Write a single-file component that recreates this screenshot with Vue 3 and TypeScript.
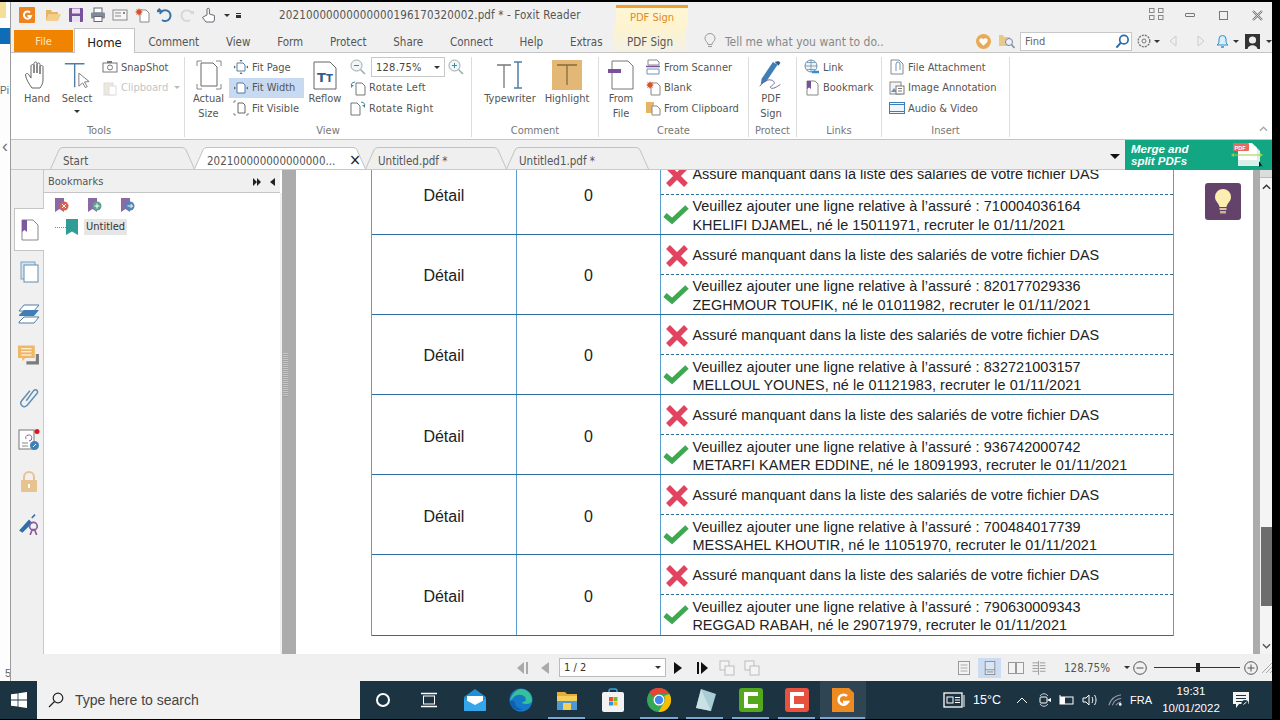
<script setup lang="ts">
// Foxit Reader window with a scrolled PDF table
interface Row {
  id: string;
  name: string;
  born: string;
}

const rows: Row[] = [
  { id: "710004036164", name: "KHELIFI DJAMEL", born: "15011971" },
  { id: "820177029336", name: "ZEGHMOUR TOUFIK", born: "01011982" },
  { id: "832721003157", name: "MELLOUL YOUNES", born: "01121983" },
  { id: "936742000742", name: "METARFI KAMER EDDINE", born: "18091993" },
  { id: "700484017739", name: "MESSAHEL KHOUTIR", born: "11051970" },
  { id: "790630009343", name: "REGGAD RABAH", born: "29071979" },
];

const ribbonTabs = ["Comment", "View", "Form", "Protect", "Share", "Connect", "Help", "Extras"];

const docTabs = [
  { label: "Start", width: 145, active: false, close: false },
  { label: "202100000000000000...", width: 172, active: true, close: true },
  { label: "Untitled.pdf *", width: 142, active: false, close: false },
  { label: "Untitled1.pdf *", width: 143, active: false, close: false },
];

const tabPath = (w: number) =>
  `M0.5 22 L9 3 Q10 0.5 13 0.5 H${w - 13} Q${w - 10} 0.5 ${w - 9} 3 L${w - 0.5} 22`;

const underlined = [
  { left: 548, width: 37 },
  { left: 640, width: 38 },
  { left: 686, width: 37 },
  { left: 732, width: 37 },
  { left: 778, width: 37 },
  { left: 820, width: 45 },
];
</script>

<template>
  <div class="screen">
    <div class="upper">
      <div class="desktop">
        <div class="d-yellow"></div>
        <div class="d-white"></div>
        <div class="d-blue"></div>
        <div class="d-text">Pi</div>
        <div class="d-arrow">‹</div>
        <div class="d-five">5</div>
      </div>

      <div class="window ui">
        <!-- title bar -->
        <div class="titlebar">
          <div class="qat">
            <svg class="q first" viewBox="0 0 16 16"><rect width="16" height="16" rx="1" fill="#ee8420"/><path d="M11 5.500A3.600 3.600 0 1 0 12 9H8.500" fill="none" stroke="#fff" stroke-width="2"/></svg>
            <svg class="q" viewBox="0 0 16 16"><path d="M1 3h5l1 2h6v2H4L1 14z" fill="#e5b565"/><path d="M4 7h12l-3 7H1z" fill="#f2cd8c"/></svg>
            <svg class="q" viewBox="0 0 16 16"><rect x="1" y="1" width="14" height="14" rx="1" fill="#7a4f9c"/><rect x="4" y="1.500" width="8" height="5" fill="#e9e2f0"/><rect x="4" y="9" width="8" height="6" fill="#e9e2f0"/></svg>
            <svg class="q" viewBox="0 0 16 16"><rect x="4" y="1" width="8" height="5" fill="#fff" stroke="#667"/><rect x="1" y="5.500" width="14" height="6" rx="1" fill="#7f8b98"/><rect x="4" y="9.500" width="8" height="5" fill="#fff" stroke="#667"/></svg>
            <svg class="q" viewBox="0 0 16 16"><rect x="1" y="3" width="14" height="10" fill="#f6f6f6" stroke="#888"/><path d="M3 6h6M3 9h6" stroke="#888"/><rect x="11" y="5" width="2" height="2" fill="#888"/></svg>
            <svg class="q" viewBox="0 0 16 16"><path d="M6 3h6l3 3v9H6z" fill="#fff" stroke="#888"/><path d="M5 1l1 2 2-1-1 2 2 1-2 1 1 2-2-1-1 2-1-2-2 1 1-2-2-1 2-1-1-2 2 1z" fill="#d9532c"/></svg>
            <svg class="q" viewBox="0 0 16 16"><path d="M3 7a5.400 5.400 0 1 1 2 6" fill="none" stroke="#3a72a8" stroke-width="2"/><path d="M0 3h6v6z" fill="#3a72a8" transform="rotate(-45 3 6) translate(0 -1)"/></svg>
            <svg class="q" viewBox="0 0 16 16"><path d="M13 7a5.400 5.400 0 1 0-2 6" fill="none" stroke="#d4d8da" stroke-width="2"/><path d="M11 4l4 0 0 4z" fill="#d4d8da"/></svg>
            <svg class="q" viewBox="0 0 16 16"><path d="M6 8V2.500a1.200 1.200 0 0 1 2.400 0V7l5 1.500V13l-1 2H5L1.500 10.500 3 9.500z" fill="#fff" stroke="#667"/></svg>
            <span class="tri small"></span>
            <span class="customize"></span>
          </div>
          <div class="doc-title">20210000000000000196170320002.pdf * - Foxit Reader</div>
          <div class="context-tab">PDF Sign</div>
          <div class="win-btns">
            <svg class="w-grid" viewBox="0 0 15 12"><g fill="none" stroke="#888"><rect x=".5" y=".5" width="4.500" height="4"/><rect x="9.500" y=".5" width="4.500" height="4"/><rect x=".5" y="7.500" width="4.500" height="4"/><rect x="9.500" y="7.500" width="4.500" height="4"/></g></svg>
            <span class="w-min"></span>
            <span class="w-max"></span>
            <svg class="w-close" viewBox="0 0 11 11"><path d="M1 1l9 9M10 1l-9 9" stroke="#777" stroke-width="2.200"/><path d="M1 1l9 9M10 1l-9 9" stroke="#f4f4f4" stroke-width=".7"/></svg>
          </div>
        </div>

        <!-- ribbon tabs -->
        <div class="tabrow">
          <div class="tab-file">File</div>
          <div class="tab-home">Home</div>
          <div v-for="t in ribbonTabs" :key="t" class="tab">{{ t }}</div>
          <div class="tab-sign">PDF Sign</div>
          <svg class="tell-bulb" viewBox="0 0 12 16"><path d="M4 11.500C4 9 1 8.500 1 5.500a5 5 0 0 1 10 0C11 8.500 8 9 8 11.500z M4 13.500h4" fill="none" stroke="#999"/></svg>
          <div class="tell">Tell me what you want to do..</div>
          <div class="tab-tools">
            <svg class="t-heart" viewBox="0 0 16 16"><circle cx="8" cy="8" r="8" fill="#e8ab55"/><path d="M8 12.500L3.800 8.200a2.400 2.400 0 0 1 4.200-2.400 2.400 2.400 0 0 1 4.200 2.400z" fill="#fff"/></svg>
            <svg class="t-folder" viewBox="0 0 16 16"><path d="M0 2h4l1 2h6v9H0z" fill="#e8c98a"/><circle cx="10" cy="9" r="3.500" fill="#eef" stroke="#789"/><path d="M12.500 11.500L15.500 15" stroke="#789" stroke-width="1.300"/></svg>
            <div class="find">
              <span>Find</span>
              <svg viewBox="0 0 16 16"><circle cx="9.500" cy="6" r="4.500" fill="none" stroke="#2a6ca8" stroke-width="1.800"/><path d="M6 9.500L1.500 14.500" stroke="#2a6ca8" stroke-width="2.200"/></svg>
            </div>
            <svg class="t-gear" viewBox="0 0 14 14"><circle cx="7" cy="7" r="2" fill="none" stroke="#777"/><circle cx="7" cy="7" r="5.800" fill="none" stroke="#777" stroke-width="1.400" stroke-dasharray="2 1.050"/></svg>
            <span class="tri small t1"></span>
            <svg class="t-prev" viewBox="0 0 8 12"><path d="M7 1L1 6l6 5z" fill="none" stroke="#ccc"/></svg>
            <svg class="t-next" viewBox="0 0 8 12"><path d="M1 1l6 5-6 5z" fill="none" stroke="#ccc"/></svg>
            <svg class="t-bell" viewBox="0 0 13 16"><path d="M1 12c2-1 2-3 2-6a3.500 3.500 0 0 1 7 0c0 3 0 5 2 6z" fill="#d8eefa" stroke="#2f8fd0"/><path d="M5 14h3" stroke="#2f8fd0" stroke-width="1.500"/></svg>
            <span class="tri small t2"></span>
            <svg class="t-user" viewBox="0 0 15 15"><rect width="15" height="15" fill="#333"/><circle cx="7.500" cy="6" r="3.600" fill="#eee"/><path d="M2.500 15c1-5 9-5 10 0z" fill="#eee"/></svg>
            <span class="tri small t3"></span>
          </div>
        </div>

        <!-- ribbon -->
        <div class="ribbon">
          <section class="group g-tools">
            <div class="group-body">
              <div class="big">
                <svg class="bi" viewBox="0 0 26 30"><path d="M8 28C5 24 2 19 1.500 15c0-2 2.500-2 3.500 0l2 3V6c0-2 3-2 3 0v7-9.500c0-2 3-2 3 0V13V4.500c0-2 3-2 3 0V14V7c0-2 3-2 3 0v13c0 4-2 6-3 8z" fill="#fff" stroke="#666"/></svg>
                <span>Hand</span>
              </div>
              <div class="big">
                <svg class="bi" viewBox="0 0 30 30"><path d="M2 3h21M12.500 3v25" stroke="#4f7da6" stroke-width="1.500"/><path d="M17 13l0 14 4-3.500 3 5 2-1-3-5 5-.5z" fill="#fff" stroke="#777"/></svg>
                <span>Select</span>
                <i class="tri small under"></i>
              </div>
              <div class="col">
                <div class="small-row"><svg viewBox="0 0 16 16"><rect x="1" y="4" width="14" height="9" fill="none" stroke="#777"/><rect x="5" y="2" width="5" height="2" fill="#777"/><circle cx="8" cy="8.500" r="2.500" fill="none" stroke="#777"/></svg><span>SnapShot</span></div>
                <div class="small-row off"><svg viewBox="0 0 16 16"><rect x="2" y="3" width="9" height="12" fill="#f0e8da" stroke="#ddd"/><rect x="7" y="6" width="7" height="9" fill="#fff" stroke="#ddd"/></svg><span>Clipboard</span><i class="tri small light"></i></div>
              </div>
            </div>
            <div class="caption">Tools</div>
          </section>

          <section class="group g-view">
            <div class="group-body">
              <div class="big two">
                <svg class="bi" viewBox="0 0 26 30"><path d="M1 6V1h5M20 1h5v5M1 24v5h5M25 24v5h-5" fill="none" stroke="#888"/><path d="M5 3h12l4 4v19H5z" fill="#fff" stroke="#666"/></svg>
                <span>Actual<br />Size</span>
              </div>
              <div class="col">
                <div class="small-row fit"><svg viewBox="0 0 16 16"><path d="M4 4h6l2 2v6H4z" fill="#fff" stroke="#4f7da6"/><path d="M8 3L6.500 1h3zM8 13l-1.500 2h3zM3 8L1 6.500v3zM13 8l2-1.500v3z" fill="#666"/></svg><span>Fit Page</span></div>
                <div class="small-row fit on"><svg viewBox="0 0 16 16"><path d="M4 3h6l2 2v8H4z" fill="#fff" stroke="#4f7da6"/><path d="M3 8L1 6.500v3zM13 8l2-1.500v3z" fill="#666"/></svg><span>Fit Width</span></div>
                <div class="small-row fit"><svg viewBox="0 0 16 16"><path d="M5 3h5l2 2v8H5z" fill="#fff" stroke="#666"/><path d="M1 3V1h2M1 13v2h2M15 13v2h-2" fill="none" stroke="#888"/></svg><span>Fit Visible</span></div>
              </div>
              <div class="big">
                <svg class="bi" viewBox="0 0 24 30"><path d="M1 2h16l6 6v21H1z" fill="#fff" stroke="#666"/><text x="4" y="22" class="reflow-t">T<tspan font-size="10">T</tspan></text></svg>
                <span>Reflow</span>
              </div>
              <div class="col zoom-col">
                <div class="small-row">
                  <svg viewBox="0 0 16 16"><circle cx="6.500" cy="6.500" r="5.500" fill="#f3f6f8" stroke="#9aa"/><path d="M10.500 10.500L15 15" stroke="#9aa" stroke-width="1.500"/><path d="M4 6.500h5" stroke="#3a8ca0"/></svg>
                  <div class="combo">128.75%<i class="tri small"></i></div>
                  <svg viewBox="0 0 16 16"><circle cx="6.500" cy="6.500" r="5.500" fill="#f3f6f8" stroke="#9aa"/><path d="M10.500 10.500L15 15" stroke="#9aa" stroke-width="1.500"/><path d="M4 6.500h5M6.500 4v5" stroke="#3a8ca0"/></svg>
                </div>
                <div class="small-row"><svg viewBox="0 0 16 16"><path d="M6 3h6l3 3v9H6z" fill="#fff" stroke="#777"/><path d="M1 5a4 4 0 0 1 4-3" fill="none" stroke="#3a8ca0"/><path d="M1 8V5h3z" fill="#3a8ca0"/></svg><span>Rotate Left</span></div>
                <div class="small-row"><svg viewBox="0 0 16 16"><path d="M1 3h6l3 3v9H1z" fill="#fff" stroke="#777"/><path d="M15 5a4 4 0 0 0-4-3" fill="none" stroke="#3a8ca0"/><path d="M15 8V5h-3z" fill="#3a8ca0"/></svg><span>Rotate Right</span></div>
              </div>
            </div>
            <div class="caption">View</div>
          </section>

          <section class="group g-comment">
            <div class="group-body">
              <div class="big">
                <svg class="bi" viewBox="0 0 28 30"><path d="M1 5h14M8 5v23" stroke="#777" stroke-width="1.300"/><path d="M18 2h8M22 2v26M18 28h8" stroke="#4f7da6" stroke-width="1.500" fill="none"/></svg>
                <span>Typewriter</span>
              </div>
              <div class="big">
                <svg class="bi hl" viewBox="0 0 30 30"><rect width="30" height="30" fill="#e3b877"/><path d="M5 5h20M15 5v20" stroke="#8a6a3a" stroke-width="1.300"/></svg>
                <span>Highlight</span>
              </div>
            </div>
            <div class="caption">Comment</div>
          </section>

          <section class="group g-create">
            <div class="group-body">
              <div class="big two">
                <svg class="bi" viewBox="0 0 26 30"><path d="M4 1h16l5 5v23H4z" fill="#fff" stroke="#777"/><rect x="0" y="9" width="13" height="4" fill="#7a4f9c"/></svg>
                <span>From<br />File</span>
              </div>
              <div class="col">
                <div class="small-row"><svg viewBox="0 0 16 16"><path d="M3 1h9l2 2v3H3z" fill="#fff" stroke="#888"/><path d="M1 7.500h14" stroke="#7a4f9c" stroke-width="1.500"/><path d="M2 10h12v5H2z" fill="#fff" stroke="#6f94b8"/></svg><span>From Scanner</span></div>
                <div class="small-row"><svg viewBox="0 0 16 16"><path d="M6 3h6l3 3v9H6z" fill="#fff" stroke="#888"/><path d="M5 1l1 2 2-1-1 2 2 1-2 1 1 2-2-1-1 2-1-2-2 1 1-2-2-1 2-1-1-2 2 1z" fill="#d9532c"/></svg><span>Blank</span></div>
                <div class="small-row"><svg viewBox="0 0 16 16"><rect x="1" y="2" width="8" height="11" fill="#e5b565"/><path d="M7 6h5l3 3v6H7z" fill="#fff" stroke="#888"/></svg><span>From Clipboard</span></div>
              </div>
            </div>
            <div class="caption">Create</div>
          </section>

          <section class="group g-protect">
            <div class="group-body">
              <div class="big two">
                <svg class="bi" viewBox="0 0 28 32"><path d="M4 20L16 2l5 3-12 18-6 3z" fill="#3f7fb5"/><path d="M18 2l4-1 2 2-2 3z" fill="#2f5f8a"/><path d="M2 28c6-8 12-8 15-5 3 3-6 5-3 7 2 1 6-1 10-4" fill="none" stroke="#6a6a88"/></svg>
                <span>PDF<br />Sign</span>
              </div>
            </div>
            <div class="caption">Protect</div>
          </section>

          <section class="group g-links">
            <div class="group-body">
              <div class="col">
                <div class="small-row"><svg viewBox="0 0 16 16"><circle cx="7" cy="7" r="6" fill="#eef3f7" stroke="#6f8ea8"/><path d="M1 7h12M7 1v12M3 3.500h8M3 10.500h8" stroke="#6f8ea8" stroke-width=".8"/><path d="M8 13h7" stroke="#2f8fd0" stroke-width="2.500"/></svg><span>Link</span></div>
                <div class="small-row"><svg viewBox="0 0 16 16"><path d="M3 1h8l3 3v11H3z" fill="#fff" stroke="#888"/><path d="M3 1h4v8L5 7.500 3 9z" fill="#7a4f9c"/></svg><span>Bookmark</span></div>
              </div>
            </div>
            <div class="caption">Links</div>
          </section>

          <section class="group g-insert">
            <div class="group-body">
              <div class="col">
                <div class="small-row"><svg viewBox="0 0 16 16"><path d="M2 1h8l4 4v10H2z" fill="#fff" stroke="#888"/><path d="M7 12V5a2 2 0 0 1 4 0v6" fill="none" stroke="#6f94b8"/></svg><span>File Attachment</span></div>
                <div class="small-row"><svg viewBox="0 0 16 16"><rect x="1" y="2" width="11" height="12" fill="#f4f4f4" stroke="#888"/><path d="M2 12l3-4 3 4z" fill="#6f94b8"/><rect x="7" y="6" width="8" height="8" fill="#fff" stroke="#777"/><path d="M9 8.500h4M9 11h4" stroke="#777"/></svg><span>Image Annotation</span></div>
                <div class="small-row"><svg viewBox="0 0 16 16"><rect x=".5" y="2.500" width="15" height="11" fill="#eef5fb" stroke="#3f7fb5"/><path d="M.5 4.500h15M.5 11.500h15" stroke="#3f7fb5"/></svg><span>Audio &amp; Video</span></div>
              </div>
            </div>
            <div class="caption">Insert</div>
          </section>

          <svg class="collapse" viewBox="0 0 10 6"><path d="M1 5l4-4 4 4" fill="none" stroke="#aaa" stroke-width="1.500"/></svg>
        </div>

        <!-- document tabs -->
        <div class="docbar">
          <div class="doctabs">
            <div v-for="t in docTabs" :key="t.label" class="doctab" :class="{ active: t.active }" :style="{ width: t.width + 'px' }">
              <svg class="tabshape" :width="t.width" height="23"><path :d="tabPath(t.width)" :fill="t.active ? '#fff' : '#efefef'" stroke="#c2c2c2"/></svg>
              <span class="doctab-label">{{ t.label }}</span>
              <span v-if="t.close" class="doctab-x">×</span>
            </div>
          </div>
          <span class="tri bar-tri"></span>
          <div class="merge">
            <div class="merge-text">Merge and<br />split PDFs</div>
            <svg class="merge-icon" viewBox="0 0 32 26"><path d="M7 4h17l5 5v15H7z" fill="#d9f0ea"/><path d="M7 1h14l5 5v12H7z" fill="#fff"/><rect x="2" y="1" width="16" height="8" rx="1" fill="#e56a62"/><text x="3.500" y="7.500" class="pdf-t">PDF</text><path d="M3 13h28" stroke="#9ad13c"/><path d="M0 13l3-2v4zM32 13l-3-2v4z" fill="#9ad13c"/><path d="M28 19l0 6 2-1.500 2 1.500z" fill="#111"/></svg>
          </div>
        </div>

        <!-- main area -->
        <div class="body">
          <nav class="sidenav">
            <div class="nav-item active">
              <svg viewBox="0 0 18 22"><path d="M1 1h11l5 5v15H1z" fill="#fff" stroke="#888"/><path d="M1 1h5v12l-2.500-2L1 13z" fill="#7a5a9c"/></svg>
            </div>
            <div class="nav-item">
              <svg viewBox="0 0 18 22"><rect x="1" y="1" width="14" height="17" fill="#d6e4ef" stroke="#7fa0bd"/><rect x="4" y="4" width="14" height="17" fill="#fff" stroke="#5f8db5"/></svg>
            </div>
            <div class="nav-item">
              <svg viewBox="0 0 22 20"><path d="M6 1h15l-5 6H1z" fill="#fff" stroke="#4f7da6"/><path d="M1 11l5-5h15l-5 6H1z" fill="#3f7fb5"/><path d="M1 18l5-5h15l-5 6H1z" fill="#fff" stroke="#4f7da6"/></svg>
            </div>
            <div class="nav-item">
              <svg viewBox="0 0 21 20"><path d="M0 0h16v12H7l-3 3v-3H0z" fill="#efb866"/><path d="M3 3h10M3 6h10M3 9h10" stroke="#fff"/><path d="M8 15h9v-7h3v10H8z" fill="#7c7c7c"/></svg>
            </div>
            <div class="nav-item">
              <svg viewBox="0 0 20 24"><path d="M7 15L15 4c3-3 6 1 3 4L8 20c-4 4-9-1-6-5L11 4" fill="none" stroke="#5f8db5" stroke-width="1.600"/></svg>
            </div>
            <div class="nav-item">
              <svg viewBox="0 0 22 22"><rect x="1" y="1" width="15" height="19" fill="#fff" stroke="#777"/><path d="M8 10a3 3 0 1 1 3 2" fill="none" stroke="#8a5a9c"/><path d="M4 14h6M4 17h6" stroke="#888"/><circle cx="16.500" cy="16.500" r="4.500" fill="#3f7fb5"/><path d="M15 18l3-3" stroke="#fff"/><circle cx="19" cy="2.500" r="2.500" fill="#e0141c"/></svg>
            </div>
            <div class="nav-item">
              <svg viewBox="0 0 18 22"><path d="M4 10V6a5 5 0 0 1 10 0v4" fill="none" stroke="#e7c48f" stroke-width="2"/><rect x="1" y="9" width="16" height="12" rx="1" fill="#e7c48f"/><rect x="8" y="13" width="2" height="4" fill="#fff"/></svg>
            </div>
            <div class="nav-item">
              <svg viewBox="0 0 20 20"><path d="M1 16L10 6l3 3-9 9z M12 4l3-3 1 1-3 3z" fill="#2f6fa8"/><circle cx="14" cy="12" r="3.500" fill="none" stroke="#8a5a9c" stroke-width="1.500"/><path d="M11 20l2-5h2l2 5" fill="none" stroke="#8a5a9c" stroke-width="1.500"/></svg>
            </div>
          </nav>

          <aside class="panel">
            <div class="panel-head">
              <span>Bookmarks</span>
              <div class="panel-ctl">
                <svg viewBox="0 0 8 8"><path d="M0 0l4 4-4 4zM4 0l4 4-4 4z" fill="#222"/></svg>
                <svg class="single" viewBox="0 0 5 8"><path d="M5 0L0 4l5 4z" fill="#222"/></svg>
              </div>
            </div>
            <div class="panel-body">
              <div class="bm-tools">
                <svg viewBox="0 0 16 16"><path d="M1 0h9v14l-4.500-3L1 14z" fill="#8a6aa6"/><circle cx="10" cy="8" r="4.500" fill="#d9604a"/><path d="M8 6l4 4M12 6l-4 4" stroke="#fff"/></svg>
                <svg viewBox="0 0 16 16"><path d="M1 0h9v14l-4.500-3L1 14z" fill="#8a6aa6"/><circle cx="10" cy="8" r="4.500" fill="#5aa58a"/><path d="M7.500 8h5M10 5.500v5" stroke="#fff"/></svg>
                <svg viewBox="0 0 16 16"><path d="M1 0h9v14l-4.500-3L1 14z" fill="#8a6aa6"/><circle cx="10" cy="8" r="4.500" fill="#4f86b5"/><path d="M7.500 8h5M10.500 6l2 2-2 2" stroke="#fff" fill="none"/></svg>
              </div>
              <div class="bm-item">
                <span class="bm-dots"></span>
                <svg viewBox="0 0 12 16"><path d="M0 0h12v16l-6-3.500L0 16z" fill="#2f9c96"/></svg>
                <span class="bm-label">Untitled</span>
              </div>
            </div>
          </aside>

          <div class="splitter"><div class="grip"></div></div>

          <main class="page-area">
            <div class="table">
              <div v-for="r in rows" :key="r.id" class="row">
                <div class="cell c-label">Détail</div>
                <div class="cell c-count">0</div>
                <div class="c-msgs">
                  <div class="msg msg-err">
                    <svg class="ico-x" viewBox="0 0 24 24"><path d="M3 3l18 18M21 3L3 21" stroke="#e2445f" stroke-width="5.500"/></svg>
                    <span>Assuré manquant dans la liste des salariés de votre fichier DAS</span>
                  </div>
                  <div class="msg msg-ok">
                    <svg class="ico-ok" viewBox="0 0 26 20"><path d="M2 11l7 6L24 3" fill="none" stroke="#3fa652" stroke-width="5"/></svg>
                    <span>Veuillez ajouter une ligne relative à l’assuré : {{ r.id }}<br />{{ r.name }}, né le {{ r.born }}, recruter le 01/11/2021</span>
                  </div>
                </div>
              </div>
            </div>
            <div class="bulb">
              <svg viewBox="0 0 18 26"><path d="M5.500 18C5 14 1 12.500 1 8a8 8 0 0 1 16 0c0 4.500-4 6-4.500 10z" fill="#fbeeb0"/><rect x="5.500" y="19" width="7" height="2" fill="#d9c9a8"/><rect x="6" y="22" width="6" height="2.500" fill="#c9b48e"/></svg>
            </div>
          </main>

          <div class="vbar"></div>
          <div class="scroll">
            <div class="scroll-cap"></div>
            <svg class="chev" viewBox="0 0 10 6"><path d="M1 5l4-4 4 4" fill="none" stroke="#333" stroke-width="1.600"/></svg>
            <div class="scroll-thumb"></div>
            <svg class="chev down" viewBox="0 0 10 6"><path d="M1 1l4 4 4-4" fill="none" stroke="#555" stroke-width="1.600"/></svg>
          </div>
        </div>

        <!-- status bar -->
        <div class="status">
          <svg class="s-nav first-nav" viewBox="0 0 13 12"><path d="M8 0v12L1 6z" fill="#aaa"/><path d="M11 0v12" stroke="#aaa" stroke-width="2"/></svg>
          <svg class="s-nav prev-nav" viewBox="0 0 8 12"><path d="M8 0v12L0 6z" fill="#aaa"/></svg>
          <div class="pagebox">1 / 2<i class="tri small"></i></div>
          <svg class="s-nav next-nav" viewBox="0 0 8 12"><path d="M0 0v12l8-6z" fill="#111"/></svg>
          <svg class="s-nav last-nav" viewBox="0 0 13 12"><path d="M5 0v12l7-6z" fill="#111"/><path d="M2 0v12" stroke="#111" stroke-width="2"/></svg>
          <svg class="s-doc" viewBox="0 0 16 16"><g fill="#f4f4f4" stroke="#bbb"><rect x="1" y="1" width="9" height="9"/><rect x="6" y="6" width="9" height="9"/></g></svg>
          <svg class="s-doc second" viewBox="0 0 16 16"><g fill="#f4f4f4" stroke="#bbb"><rect x="1" y="1" width="9" height="9"/><rect x="6" y="6" width="9" height="9"/></g></svg>
          <div class="view-modes">
            <svg viewBox="0 0 12 14"><rect x=".5" y=".5" width="11" height="13" fill="#f4f4f4" stroke="#999"/><path d="M2.500 4h7M2.500 7h7M2.500 10h7" stroke="#aaa"/></svg>
            <div class="mode-on"><svg viewBox="0 0 12 16"><rect x=".5" y=".5" width="11" height="15" fill="#dbe6f5" stroke="#888"/><path d="M.5 10h11M2.500 12.500h7" stroke="#888"/></svg></div>
            <svg class="wide" viewBox="0 0 16 12"><rect x=".5" y=".5" width="7" height="11" fill="#f4f4f4" stroke="#999"/><rect x="8.500" y=".5" width="7" height="11" fill="#f4f4f4" stroke="#999"/></svg>
            <svg class="wide" viewBox="0 0 16 15"><path d="M7.500 0v15M1 2h6M1 5h6M1 8h6M1 11h6M9 2h6M9 5h6M9 8h6M9 11h6" stroke="#999"/></svg>
          </div>
          <span class="zoom-val">128.75%</span>
          <i class="tri small zoom-tri"></i>
          <svg class="s-zoom minus" viewBox="0 0 14 14"><circle cx="7" cy="7" r="6.300" fill="none" stroke="#555"/><path d="M3.500 7h7" stroke="#555"/></svg>
          <div class="slider"><span class="thumb"></span></div>
          <svg class="s-zoom" viewBox="0 0 14 14"><circle cx="7" cy="7" r="6.300" fill="none" stroke="#555"/><path d="M3.500 7h7M7 3.500v7" stroke="#555"/></svg>
          <svg class="s-grip" viewBox="0 0 10 10"><path d="M0 10L10 0M4 10l6-6M8 10l2-2" stroke="#aaa"/></svg>
        </div>
      </div>

      <div class="edge"></div>
    </div>

    <!-- windows taskbar -->
    <footer class="taskbar">
      <div class="start">
        <svg viewBox="0 0 16 16"><path d="M0 2.300L6.600 1.400V7.600H0zM7.400 1.300L16 0V7.600H7.400zM0 8.400H6.600V14.600L0 13.700zM7.400 8.400H16V16L7.400 14.700z" fill="#fff"/></svg>
      </div>
      <div class="search">
        <svg viewBox="0 0 16 16"><circle cx="10" cy="6" r="4.800" fill="none" stroke="#222" stroke-width="1.200"/><path d="M6.500 9.500L1 15" stroke="#222" stroke-width="1.200"/></svg>
        <span>Type here to search</span>
      </div>
      <div class="tb-icons">
        <div class="tb"><span class="cortana"></span></div>
        <div class="tb"><svg class="i16" viewBox="0 0 16 16"><rect x="2.500" y="4" width="11" height="8" fill="none" stroke="#fff"/><path d="M0 1.500h16M0 14.500h16" stroke="#fff" stroke-width="1.300"/></svg></div>
        <div class="tb"><svg class="i24" viewBox="0 0 24 24"><path d="M1 9L12 1l11 8v13a1 1 0 0 1-1 1H2a1 1 0 0 1-1-1z" fill="#1f8fd8"/><path d="M4 8h16v7l-8 4-8-4z" fill="#fff"/><path d="M1 11l11 6 11-6v11a1 1 0 0 1-1 1H2a1 1 0 0 1-1-1z" fill="#36a6ea"/></svg></div>
        <div class="tb"><svg class="i24" viewBox="0 0 24 24"><circle cx="12" cy="12" r="11.500" fill="#1678c8"/><path d="M1 13C2 6 8 1 12 1c6 0 11 5 11 11 0 3-3 4-6 4s-4-1-4-2c3 0 5-2 3-5-3-3-9-3-12 1z" fill="#35c29a"/><path d="M6 14c0 4 3 7 8 7-6 3-12-1-13-7 1-2 3-2 5 0z" fill="#0f5fb0"/></svg></div>
        <div class="tb"><svg class="i24" viewBox="0 0 24 24"><path d="M2 4h8l2 2h10v16H2z" fill="#e5ad3a"/><path d="M2 8h20v14H2z" fill="#f6cf5a"/><path d="M2 13h20v9H2z" fill="#4a9ad8"/><rect x="8" y="15" width="8" height="7" fill="#f6cf5a"/></svg></div>
        <div class="tb"><svg class="i24" viewBox="0 0 24 24"><path d="M8 5V3a2 2 0 0 1 2-2h4a2 2 0 0 1 2 2v2" fill="none" stroke="#3fa0d8" stroke-width="1.500"/><rect x="1" y="4" width="22" height="20" rx="2" fill="#f2f2f2"/><rect x="8" y="9" width="4" height="4" fill="#e8502a"/><rect x="12.500" y="9" width="4" height="4" fill="#7ab82a"/><rect x="8" y="13.500" width="4" height="4" fill="#2a98e0"/><rect x="12.500" y="13.500" width="4" height="4" fill="#f2b824"/></svg></div>
        <div class="tb"><svg class="i24" viewBox="0 0 24 24"><circle cx="12" cy="12" r="12" fill="#34a853"/><path d="M12 0a12 12 0 0 1 10.400 6H12a6 6 0 0 0-5.500 3.500L2.500 4A12 12 0 0 1 12 0z" fill="#ea4335"/><path d="M22.400 6a12 12 0 0 1-11 18l5-8.500A6 6 0 0 0 17 8z" fill="#fbbc05"/><circle cx="12" cy="12" r="5.500" fill="#fff"/><circle cx="12" cy="12" r="4.200" fill="#4285f4"/></svg></div>
        <div class="tb"><svg class="i24" viewBox="0 0 24 24"><path d="M8 1l15 5-5 17-15-3z" fill="#a9cdd6"/><path d="M8 1l-5 19 15 3z" fill="#d7e9ea" opacity=".7"/></svg></div>
        <div class="tb"><svg class="i24" viewBox="0 0 24 24"><rect width="24" height="24" rx="3" fill="#54a81c"/><path d="M19 6H7v12h12" fill="none" stroke="#fff" stroke-width="4"/></svg></div>
        <div class="tb"><svg class="i24" viewBox="0 0 24 24"><rect width="24" height="24" rx="3" fill="#e85040"/><path d="M19 6H7v12h12" fill="none" stroke="#fff" stroke-width="4"/></svg></div>
        <div class="tb tb-on"><svg class="i24" viewBox="0 0 24 24"><path d="M1 0h17l5 5v19H1z" fill="#ee8a22"/><path d="M16 8a5 5 0 1 0 1 6h-5" fill="none" stroke="#fff" stroke-width="2.500"/></svg></div>
      </div>
      <div class="tray">
        <svg class="t-news" viewBox="0 0 22 16"><rect x="1" y="1" width="18" height="14" fill="none" stroke="#fff" stroke-width="1.300"/><rect x="4" y="5" width="6" height="6" fill="none" stroke="#fff"/><path d="M12 5.500h5M12 8h5M12 10.500h5M21 3v12" stroke="#fff"/></svg>
        <span class="t-temp">15°C</span>
        <svg class="t-up" viewBox="0 0 12 7"><path d="M1 6l5-5 5 5" fill="none" stroke="#fff"/></svg>
        <svg class="t-cam" viewBox="0 0 14 16"><path d="M2 4c2-3 6-3 8 0M2 12c2 3 6 3 8 0" fill="none" stroke="#ccd"/><rect x="2" y="5" width="7" height="6" rx="1" fill="none" stroke="#fff"/><path d="M9 8l4-2v4z" fill="#fff"/></svg>
        <svg class="t-bat" viewBox="0 0 16 10"><rect x="2" y="2" width="13" height="7" fill="none" stroke="#fff"/><rect x="2" y="2" width="5" height="7" fill="#fff"/><path d="M2 0v2" stroke="#fff"/></svg>
        <svg class="t-spk" viewBox="0 0 16 14"><path d="M1 5h3l3-3v10l-3-3H1z" fill="none" stroke="#fff"/><path d="M10 4c1 2 1 4 0 6M12.500 2c2 3 2 7 0 10" fill="none" stroke="#fff"/></svg>
        <svg class="t-wifi" viewBox="0 0 16 14"><path d="M1 13C3 6 8 2 15 1M5 13c1-4 5-7 10-8M9 13c1-2 3-3 6-4" fill="none" stroke="#99a" stroke-width="1.200"/><circle cx="14" cy="12" r="1.500" fill="#fff"/></svg>
        <span class="t-lang">FRA</span>
        <div class="t-clock"><span>19:31</span><span>10/01/2022</span></div>
        <svg class="t-note" viewBox="0 0 16 16"><path d="M0 0h16v12H6l-3 4v-4H0z" fill="#f4f4f4"/><path d="M3 3.500h10M3 6.500h10M3 9.500h6" stroke="#1c3342"/><circle cx="12" cy="11.500" r="3.500" fill="#1c3342"/><path d="M10.500 12.500l3-2.500" stroke="#fff"/></svg>
      </div>
      <span v-for="u in underlined" :key="u.left" class="tb-line" :style="{ left: u.left + 'px', width: u.width + 'px' }"></span>
    </footer>
  </div>
</template>

<style scoped>
.screen {
  width: 1280px;
  height: 720px;
  background: #000;
  padding-top: 2px;
  box-sizing: border-box;
  overflow: hidden;
  display: flex;
  flex-direction: column;
}
.upper {
  height: 679px;
  display: flex;
}
.desktop {
  width: 10px;
  background: #fdfdfd;
  display: flex;
  flex-direction: column;
  overflow: hidden;
  font: 10px "Liberation Sans", sans-serif;
  color: #666;
}
.d-yellow {
  height: 16px;
  width: 6px;
  background: #f5dd9a;
}
.d-white {
  height: 10px;
}
.d-blue {
  height: 16px;
  background: #0f6cb6;
}
.d-text {
  margin-top: 41px;
  height: 12px;
}
.d-arrow {
  margin-top: 42px;
  font-size: 18px;
  line-height: 14px;
  margin-left: 2px;
  color: #777;
  height: 14px;
}
.d-five {
  margin-top: 514px;
  font-size: 11px;
  margin-left: 5px;
}
.edge {
  width: 8px;
  background: #000;
}
.window {
  width: 1262px;
  background: #f0f0f0;
  border-left: 1px solid #9b9b9b;
  box-sizing: border-box;
  display: flex;
  flex-direction: column;
  position: relative;
}
.ui {
  font-family: "DejaVu Sans Condensed", "DejaVu Sans", sans-serif;
  font-stretch: condensed;
  font-size: 11px;
  color: #555;
}
.tri {
  display: inline-block;
  width: 0;
  height: 0;
  border-left: 5px solid transparent;
  border-right: 5px solid transparent;
  border-top: 5px solid #111;
}
.tri.small {
  border-left-width: 3px;
  border-right-width: 3px;
  border-top-width: 3px;
  border-top-color: #333;
}

/* title bar */
.titlebar {
  height: 26px;
  display: flex;
  align-items: center;
  padding-left: 8px;
}
.qat {
  width: 260px;
  display: flex;
  align-items: center;
  gap: 6.3px;
}
.q {
  width: 16px;
  height: 16px;
  flex: none;
}
.q.first {
  margin-right: 4px;
}
.customize {
  width: 5px;
  height: 5px;
  border-top: 1px solid #333;
  border-bottom: 3px solid #333;
  box-sizing: border-box;
}
.doc-title {
  width: 337px;
  font-size: 11.5px;
  white-space: nowrap;
  color: #555;
  letter-spacing: 0.15px;
}
.context-tab {
  width: 72px;
  align-self: flex-end;
  height: 23px;
  box-sizing: border-box;
  border-top: 3px solid #f0a030;
  background: linear-gradient(#fff6d6, #fdf3cf);
  color: #e08a20;
  text-align: center;
  line-height: 20px;
}
.win-btns {
  flex: 1;
  display: flex;
  align-items: center;
  padding-left: 461px;
}
.w-grid {
  width: 15px;
  height: 12px;
  margin-top: -2px;
}
.w-min {
  width: 10px;
  height: 4px;
  border: 1px solid #777;
  border-radius: 1px;
  margin-left: 21px;
  box-sizing: border-box;
}
.w-max {
  width: 9px;
  height: 9px;
  border: 1px solid #777;
  margin-left: 24px;
  box-sizing: border-box;
}
.w-close {
  width: 11px;
  height: 11px;
  margin-left: 24px;
}

/* ribbon tabs */
.tabrow {
  height: 25px;
  display: flex;
  align-items: stretch;
  padding-left: 3px;
  box-sizing: border-box;
  border-bottom: 1px solid #c4c4c4;
  line-height: 28px;
  position: relative;
}
.tab-file {
  width: 59px;
  margin-top: 2px;
  background: #f08300;
  color: #fbe6cb;
  text-align: center;
  line-height: 24px;
}
.tab-home {
  width: 61px;
  margin-left: 1px;
  height: 25px;
  box-sizing: border-box;
  border: 1px solid #c4c4c4;
  border-bottom: none;
  background: #fff;
  color: #222;
  font-size: 13px;
  text-align: center;
  line-height: 27px;
  position: relative;
  z-index: 1;
}
.tab {
  padding: 0 13.4px;
  font-size: 11.5px;
}
.tab-sign {
  width: 72px;
  text-align: center;
  margin-left: -2px;
  font-size: 11.5px;
  background: linear-gradient(#fdf3cf, #f3f1e6);
}
.tell-bulb {
  width: 12px;
  height: 16px;
  margin: 5px 0 0 18px;
}
.tell {
  margin-left: 9px;
  color: #888;
  white-space: nowrap;
  font-size: 12px;
}
.tab-tools {
  position: absolute;
  left: 965px;
  top: 2px;
  bottom: 0;
  display: flex;
  align-items: center;
}
.t-heart {
  width: 15px;
  height: 15px;
}
.t-folder {
  width: 16px;
  height: 16px;
  margin-left: 8px;
}
.find {
  width: 112px;
  height: 19px;
  margin-left: 5px;
  background: #fff;
  border: 1px solid #c8c8c8;
  box-sizing: border-box;
  display: flex;
  align-items: center;
  justify-content: space-between;
  padding: 0 1px 0 4px;
  line-height: 17px;
  color: #666;
}
.find svg {
  width: 15px;
  height: 15px;
}
.t-gear {
  width: 14px;
  height: 14px;
  margin-left: 5px;
}
.t1 {
  margin-left: 3px;
}
.t-prev {
  width: 8px;
  height: 12px;
  margin-left: 9px;
}
.t-next {
  width: 8px;
  height: 12px;
  margin-left: 20px;
}
.t-bell {
  width: 13px;
  height: 16px;
  margin-left: 11px;
}
.t2 {
  margin-left: 4px;
}
.t-user {
  width: 15px;
  height: 15px;
  margin-left: 6px;
}
.t3 {
  margin-left: 6px;
}

/* ribbon */
.ribbon {
  height: 87px;
  box-sizing: border-box;
  background: #fff;
  border-bottom: 1px solid #c4c4c4;
  display: flex;
  padding: 4px 0 0 3px;
  position: relative;
}
.group {
  display: flex;
  flex-direction: column;
  border-right: 1px solid #dcdcdc;
  box-sizing: border-box;
  height: 80px;
}
.group-body {
  height: 67px;
  display: grid;
  grid-auto-flow: column;
  justify-content: start;
}
.caption {
  text-align: center;
  line-height: 13px;
  color: #777;
}
.big {
  display: flex;
  flex-direction: column;
  align-items: center;
  line-height: 15px;
  white-space: nowrap;
  text-align: center;
}
.bi {
  height: 30px;
  width: 28px;
  margin: 3px 0 1px;
  flex: none;
}
.bi.hl {
  width: 30px;
}
.big .under {
  margin-top: 4px;
}
.col {
  display: flex;
  flex-direction: column;
}
.small-row {
  height: 20.5px;
  display: flex;
  align-items: center;
  gap: 3px;
  white-space: nowrap;
}
.small-row svg {
  width: 16px;
  height: 16px;
  flex: none;
}
.small-row.off {
  color: #c4c4c4;
}
.small-row .light {
  border-top-color: #bbb;
  margin-left: 3px;
}
.small-row.fit {
  padding-left: 4px;
}
.small-row.on {
  background: #c8daf2;
}
.g-tools {
  width: 171px;
}
.g-tools .group-body {
  grid-template-columns: 30px 40px auto;
  column-gap: 5px;
  padding-left: 8px;
}
.g-view {
  width: 287px;
}
.g-view .group-body {
  grid-template-columns: 30px 75px 32px auto;
  column-gap: 5px;
  padding-left: 9px;
}
.g-view .two {
  margin-left: -1px;
}
.zoom-col {
  margin-left: 4px;
  letter-spacing: 0.25px;
}
.combo {
  width: 74px;
  height: 20px;
  margin: 0 0 0 2px;
  box-sizing: border-box;
  border: 1px solid #c8c8c8;
  display: flex;
  align-items: center;
  justify-content: space-between;
  padding: 0 4px;
  color: #444;
}
.g-comment {
  width: 127px;
}
.g-comment .group-body {
  grid-template-columns: 58px 46px;
  column-gap: 5px;
  padding-left: 9px;
}
.g-create {
  width: 150px;
}
.g-create .group-body {
  grid-template-columns: 30px auto;
  column-gap: 9px;
  padding-left: 7px;
}
.g-protect {
  width: 48px;
}
.g-protect .group-body {
  justify-content: center;
  padding-right: 3px;
}
.g-links {
  width: 85px;
}
.g-links .group-body {
  padding-left: 7px;
}
.g-insert {
  width: 128px;
}
.g-insert .group-body {
  padding-left: 7px;
}
.collapse {
  position: absolute;
  right: 4px;
  top: 73px;
  width: 9px;
  height: 6px;
}
.reflow-t {
  font: 700 13px "DejaVu Sans", sans-serif;
  fill: #2f5f8a;
}

/* document tabs */
.docbar {
  height: 30px;
  display: flex;
  align-items: flex-end;
  border-bottom: 1px solid #c9c9c9;
  box-sizing: border-box;
}
.doctabs {
  display: flex;
  padding-left: 39px;
  width: 1100px;
  box-sizing: border-box;
  margin-bottom: -1px;
}
.doctab {
  height: 23px;
  position: relative;
  flex: none;
  display: flex;
  align-items: center;
  padding: 4px 0 0 13px;
  box-sizing: border-box;
  color: #555;
  margin-right: -1px;
  font-size: 11.5px;
}
.doctab.active {
  z-index: 1;
}
.tabshape {
  position: absolute;
  left: 0;
  top: 0;
}
.doctab-label {
  position: relative;
}
.doctab-x {
  position: absolute;
  right: 5px;
  top: 4px;
  font-size: 16px;
  color: #222;
  line-height: 18px;
}
.bar-tri {
  margin: 0 0 10px 0;
}
.merge {
  margin-left: 5px;
  width: 147px;
  height: 30px;
  align-self: flex-start;
  background: #12a782;
  display: flex;
  align-items: center;
  position: relative;
  flex: none;
}
.merge-text {
  margin-left: 6px;
  font: italic 700 11.5px/12px "Liberation Sans", sans-serif;
  color: #fff;
}
.merge-icon {
  position: absolute;
  left: 106px;
  top: 2px;
  width: 32px;
  height: 26px;
}
.pdf-t {
  font: 700 5.5px "Liberation Sans", sans-serif;
  fill: #fff;
}

/* body */
.body {
  height: 484px;
  display: flex;
  background: #fff;
}
.sidenav {
  width: 33px;
  flex: none;
  background: #f0f0f0;
  border-right: 1px solid #c9c9c9;
  box-sizing: border-box;
  padding-top: 38px;
  display: flex;
  flex-direction: column;
}
.nav-item {
  height: 42px;
  margin-left: 3px;
  display: flex;
  align-items: center;
  justify-content: center;
  flex: none;
}
.nav-item svg {
  width: 22px;
  height: 22px;
}
.nav-item.active {
  background: #fff;
  border: 1px solid #c4c4c4;
  border-right: none;
  margin-right: -1px;
  position: relative;
  box-sizing: border-box;
  height: 43px;
}
.panel {
  width: 238px;
  flex: none;
  display: flex;
  flex-direction: column;
}
.panel-head {
  height: 23px;
  background: #f0f0f0;
  border-bottom: 1px solid #c4c4c4;
  display: flex;
  align-items: center;
  justify-content: space-between;
  padding: 1px 5px 0 4px;
  box-sizing: border-box;
  color: #555;
  margin-right: 2px;
}
.panel-ctl {
  display: flex;
  gap: 9px;
  align-items: center;
}
.panel-ctl svg {
  width: 8px;
  height: 8px;
}
.panel-ctl svg.single {
  width: 5px;
}
.panel-body {
  flex: 1;
  border-right: 2px solid #f0f0f0;
  background: #fff;
}
.bm-tools {
  display: flex;
  gap: 17px;
  padding: 5px 0 0 10px;
}
.bm-tools svg {
  width: 16px;
  height: 16px;
}
.bm-item {
  display: flex;
  align-items: center;
  margin: 5px 0 0 11px;
}
.bm-dots {
  width: 11px;
  border-top: 1px dotted #888;
}
.bm-item svg {
  width: 12px;
  height: 16px;
}
.bm-label {
  margin-left: 6px;
  padding: 0 2px;
  height: 16px;
  line-height: 16px;
  background: #e6e6e6;
  color: #333;
}
.splitter {
  width: 14px;
  flex: none;
  background: #acacac;
  padding-top: 183px;
  box-sizing: border-box;
}
.grip {
  width: 5px;
  height: 44px;
  margin-left: 1px;
  background: repeating-linear-gradient(#c8c8c8 0 1px, #a0a0a0 1px 2px);
}
.page-area {
  flex: 1;
  overflow: hidden;
  padding-left: 75px;
  position: relative;
  background: #fff;
}
.table {
  width: 803px;
  margin-top: -15.5px;
  border-left: 1.5px solid #5b9fd0;
  border-right: 1.5px solid #5b9fd0;
  box-sizing: border-box;
  font-family: "Liberation Sans", Arial, sans-serif;
  color: #222;
}
.row {
  height: 80.2px;
  display: flex;
  box-sizing: border-box;
  border-bottom: 1px solid #2a6f9c;
}
.cell {
  width: 144.7px;
  flex: none;
  display: flex;
  align-items: center;
  justify-content: center;
  border-right: 1.5px solid #5b9fd0;
  box-sizing: border-box;
  font-size: 16px;
  padding-top: 4px;
}
.c-msgs {
  flex: 1;
  display: flex;
  flex-direction: column;
  font-size: 14.45px;
  line-height: 18.3px;
}
.msg {
  height: 40px;
  display: flex;
  align-items: center;
  white-space: nowrap;
  box-sizing: border-box;
}
.msg-err {
  border-bottom: 1px dashed #2a6f9c;
  padding-top: 1px;
}
.msg-ok {
  height: 39px;
  padding-top: 3px;
  letter-spacing: 0.05px;
}
.ico-x {
  width: 24px;
  height: 24px;
  margin: 2px 3px 0 4px;
  flex: none;
}
.ico-ok {
  width: 26px;
  height: 20px;
  margin: -4px 3px 0 2px;
  flex: none;
}
.bulb {
  position: absolute;
  left: 909px;
  top: 13px;
  width: 36px;
  height: 37px;
  background: #63436a;
  border-radius: 3px;
  display: flex;
  align-items: center;
  justify-content: center;
}
.bulb svg {
  width: 18px;
  height: 26px;
}
.vbar {
  width: 7px;
  flex: none;
  background: #acacac;
}
.scroll {
  width: 12px;
  flex: none;
  background: #f4f4f4;
  display: flex;
  flex-direction: column;
  align-items: center;
  position: relative;
}
.scroll-cap {
  width: 100%;
  height: 8px;
  background: #dcdcdc;
  border-bottom: 1px solid #bbb;
  box-sizing: border-box;
}
.chev {
  width: 9px;
  height: 6px;
  margin-top: 6px;
}
.chev.down {
  position: absolute;
  bottom: 5px;
  margin: 0;
}
.scroll-thumb {
  position: absolute;
  top: 357px;
  left: 1px;
  right: 0;
  height: 79px;
  background: #6d6d6d;
}

/* status bar */
.status {
  height: 27px;
  display: flex;
  align-items: center;
  position: relative;
  padding-left: 505px;
}
.s-nav {
  height: 12px;
  width: 13px;
  flex: none;
}
.prev-nav {
  width: 8px;
  margin-left: 12px;
}
.pagebox {
  width: 107px;
  height: 19px;
  margin-left: 10px;
  box-sizing: border-box;
  border: 1px solid #bbb;
  background: #fff;
  display: flex;
  align-items: center;
  justify-content: space-between;
  padding: 0 4px;
  color: #333;
}
.next-nav {
  width: 8px;
  margin-left: 8px;
}
.last-nav {
  margin-left: 14px;
}
.s-doc {
  width: 16px;
  height: 16px;
  margin-left: 10px;
}
.s-doc.second {
  margin-left: 9px;
}
.view-modes {
  display: flex;
  align-items: center;
  margin-left: 198px;
  gap: 7px;
  height: 20px;
}
.view-modes svg {
  width: 12px;
  height: 14px;
}
.view-modes svg.wide {
  width: 16px;
}
.mode-on {
  width: 23px;
  height: 20px;
  background: #ccdcf2;
  display: flex;
  align-items: center;
  justify-content: center;
  margin-left: 1px;
}
.zoom-val {
  margin-left: 17px;
  color: #555;
  font-size: 11.5px;
}
.zoom-tri {
  margin-left: 14px;
}
.s-zoom {
  width: 14px;
  height: 14px;
  margin-left: 5px;
  flex: none;
}
.s-zoom.minus {
  margin-left: 3px;
}
.slider {
  width: 86px;
  height: 1px;
  background: #333;
  margin: 0 -1px 0 7px;
  position: relative;
}
.thumb {
  position: absolute;
  left: 42px;
  top: -4px;
  width: 4px;
  height: 9px;
  background: #222;
}
.s-grip {
  position: absolute;
  right: 0;
  top: 9px;
  width: 10px;
  height: 10px;
}

/* taskbar */
.taskbar {
  width: 1272px;
  height: 38px;
  background: #1c3342;
  display: flex;
  align-items: center;
  position: relative;
  font-family: "Liberation Sans", sans-serif;
  color: #fff;
}
.start {
  width: 37px;
  height: 100%;
  display: flex;
  align-items: center;
  justify-content: center;
}
.start svg {
  width: 16px;
  height: 16px;
}
.search {
  width: 323px;
  height: 100%;
  background: #f1f1f1;
  display: flex;
  align-items: center;
  color: #444;
  font-size: 14px;
  padding-left: 11px;
  box-sizing: border-box;
}
.search svg {
  width: 16px;
  height: 16px;
  margin-right: 11px;
}
.tb-icons {
  display: flex;
  height: 100%;
}
.tb {
  width: 46px;
  height: 100%;
  display: flex;
  align-items: center;
  justify-content: center;
}
.tb-on {
  background: #2f4553;
}
.cortana {
  width: 14px;
  height: 14px;
  border: 2px solid #fff;
  border-radius: 50%;
  box-sizing: border-box;
}
.i16 {
  width: 16px;
  height: 16px;
}
.i24 {
  width: 24px;
  height: 24px;
}
.tray {
  position: absolute;
  left: 943px;
  top: 0;
  bottom: 0;
  display: flex;
  align-items: center;
  font-size: 12px;
}
.t-news {
  width: 22px;
  height: 16px;
}
.t-temp {
  margin-left: 8px;
  font-size: 12.5px;
  width: 27px;
}
.t-up {
  width: 12px;
  height: 7px;
  margin-left: 16px;
}
.t-cam {
  width: 14px;
  height: 16px;
  margin-left: 10px;
}
.t-bat {
  width: 16px;
  height: 10px;
  margin-left: 6px;
}
.t-spk {
  width: 16px;
  height: 14px;
  margin-left: 8px;
}
.t-wifi {
  width: 14px;
  height: 14px;
  margin-left: 10px;
}
.t-lang {
  margin-left: 8px;
  font-size: 11px;
  width: 22px;
}
.t-clock {
  width: 56px;
  margin-left: 11px;
  display: flex;
  flex-direction: column;
  align-items: center;
  font-size: 11.5px;
  line-height: 17px;
}
.t-note {
  width: 16px;
  height: 16px;
  margin-left: 14px;
}
.tb-line {
  position: absolute;
  bottom: 0;
  height: 2px;
  background: #7aa6d0;
}
</style>

<style>
body {
  background: #000;
}
</style>
